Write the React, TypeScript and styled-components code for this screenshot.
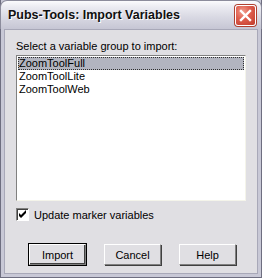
import React, { useState } from "react";
import styled, { createGlobalStyle } from "styled-components";

const GlobalStyle = createGlobalStyle`
  html, body {
    margin: 0;
    padding: 0;
    background: #ffffff;
  }
  * {
    box-sizing: border-box;
  }
`;

const groups = ["ZoomToolFull", "ZoomToolLite", "ZoomToolWeb"];

export default function App() {
  const [selected, setSelected] = useState(0);
  const [updateMarkers, setUpdateMarkers] = useState(true);

  return (
    <>
      <GlobalStyle />
      <Window>
        <TitleBar>
          <Title>Pubs-Tools: Import Variables</Title>
          <CloseButton aria-label="Close">
            <svg width="13" height="13" viewBox="0 0 13 13">
              <path d="M2 2 L11 11 M11 2 L2 11" stroke="#fff" strokeWidth="2.4" strokeLinecap="square" />
            </svg>
          </CloseButton>
        </TitleBar>
        <Client>
          <Label>Select a variable group to import:</Label>
          <ListBox>
            {groups.map((g, i) => (
              <ListItem key={g} $selected={i === selected} onClick={() => setSelected(i)}>
                {g}
              </ListItem>
            ))}
          </ListBox>
          <CheckRow onClick={() => setUpdateMarkers(!updateMarkers)}>
            <CheckBox>
              {updateMarkers && (
                <svg width="9" height="9" viewBox="0 0 9 9">
                  <path d="M1 3 L3 5 L8 0 L8 3 L3 8 L1 6 Z" fill="#000" />
                </svg>
              )}
            </CheckBox>
            <span>Update marker variables</span>
          </CheckRow>
          <ButtonRow>
            <Button $default>Import</Button>
            <Button>Cancel</Button>
            <Button>Help</Button>
          </ButtonRow>
        </Client>
      </Window>
    </>
  );
}

const Window = styled.div`
  width: 262px;
  height: 278px;
  display: flex;
  flex-direction: column;
  background: #c8c8d6;
  border: 1px solid #6e6e80;
  border-top: none;
  font-family: "Liberation Sans", Arial, sans-serif;
  font-size: 11px;
  color: #000;
`;

const TitleBar = styled.div`
  height: 29px;
  flex: none;
  display: flex;
  align-items: center;
  justify-content: space-between;
  padding: 0 5px 0 7px;
  border-radius: 7px 7px 0 0;
  background: linear-gradient(#fbfbfd 0%, #ececf2 20%, #dadae4 55%, #c6c6d4 100%);
  border: 1px solid #8c8c9c;
  border-bottom: none;
  margin: 0 -1px;
`;

const Title = styled.div`
  font-family: "Liberation Sans", Arial, sans-serif;
  font-weight: bold;
  font-size: 12.5px;
  color: #101010;
  text-shadow: 1px 1px 0 #ffffff;
`;

const CloseButton = styled.div`
  width: 21px;
  height: 21px;
  border-radius: 3px;
  border: 1px solid #ffffff;
  box-shadow: 0 0 0 1px #b04030;
  background: radial-gradient(circle at 35% 30%, #f0a090 0%, #e06050 40%, #c03a2a 100%);
  display: flex;
  align-items: center;
  justify-content: center;
`;

const Client = styled.div`
  flex: 1;
  margin: 0 3px 3px 3px;
  background: #e0dfe3;
  border: 1px solid #a8a8b8;
  display: flex;
  flex-direction: column;
  padding: 9px 11px 0 11px;
`;

const Label = styled.div`
  height: 15px;
  line-height: 15px;
`;

const ListBox = styled.div`
  margin-top: 1px;
  height: 146px;
  width: 230px;
  background: #ffffff;
  border: 1px solid;
  border-color: #808080 #f4f4ea #f4f4ea #808080;
  padding: 1px;
`;

const ListItem = styled.div<{ $selected?: boolean }>`
  height: 13px;
  line-height: 13px;
  padding-left: 1px;
  cursor: default;
  background: ${(p) => (p.$selected ? "#b2b4bf" : "transparent")};
  outline: ${(p) => (p.$selected ? "1px dotted #303030" : "none")};
  outline-offset: -1px;
`;

const CheckRow = styled.div`
  margin-top: 7px;
  display: flex;
  align-items: center;
  gap: 5px;
  height: 13px;
  cursor: default;
`;

const CheckBox = styled.div`
  width: 13px;
  height: 13px;
  background: #ffffff;
  border: 1px solid;
  border-color: #808080 #ffffff #ffffff #808080;
  box-shadow: inset 1px 1px 0 #404040;
  display: flex;
  align-items: center;
  justify-content: center;
`;

const ButtonRow = styled.div`
  margin-top: 23px;
  display: flex;
  gap: 18px;
  padding-left: 13px;
`;

const Button = styled.button<{ $default?: boolean }>`
  width: 57px;
  height: 21px;
  font-family: inherit;
  font-size: 11px;
  padding: 0;
  background: #e0dfe3;
  border: 1px solid;
  border-color: #ffffff #808080 #808080 #ffffff;
  box-shadow: ${(p) =>
    p.$default ? "0 0 0 1px #000000, inset -1px -1px 0 #404040" : "1px 1px 0 #404040"};
  color: #000;
`;
